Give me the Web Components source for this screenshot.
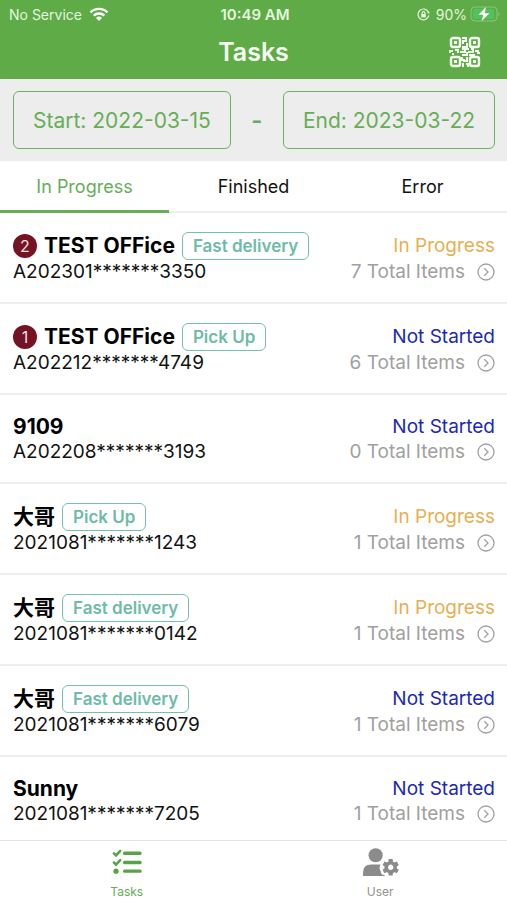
<!DOCTYPE html>
<html lang="en">
<head>
<meta charset="utf-8">
<meta name="viewport" content="width=device-width, initial-scale=1">
<title>Tasks</title>
<style>
    body {
        margin: 0;
        font-family: Inter, "Noto Sans CJK SC", sans-serif;
    }
</style>
</head>
<body>
<task-app></task-app>

<script>
class StatusBar extends HTMLElement {

    constructor() {
        super()
        this.attachShadow({mode: "open"})
        this.render()
    }

    render() {
        this.shadowRoot.innerHTML = `
            <style>
                :host {
                    display: grid;
                    grid-template-columns: 1fr auto 1fr;
                    align-items: center;
                    height: 28px;
                    padding: 0 6px 0 9px;
                    font-size: 14px;
                    color: #e4f6dd;
                }

                .side {
                    display: flex;
                    align-items: center;
                    gap: 7px;
                }

                .right {
                    justify-content: flex-end;
                    gap: 3px;
                }

                .lock {
                    margin-right: 3px;
                }

                time {
                    font-size: 15px;
                    font-weight: 600;
                }

                svg {
                    display: block;
                }
            </style>
            <div class="side">
                <span>No Service</span>
                <svg width="20" height="14" viewBox="0 0 20 14" fill="none" stroke="#fff" stroke-width="2.4">
                    <path d="M1.5 5.4a12 12 0 0 1 17 0"/>
                    <path d="M4.7 8.6a7.6 7.6 0 0 1 10.6 0"/>
                    <path d="M7 10.9a4.3 4.3 0 0 1 6 0L10 14z" fill="#fff" stroke="none"/>
                </svg>
            </div>
            <time>10:49 AM</time>
            <div class="side right">
                <svg class="lock" width="13" height="13" viewBox="0 0 13 13" fill="none" stroke="#e4f6dd" stroke-width="1.2">
                    <path d="M11.4 4.2A5.4 5.4 0 1 0 11.8 7.4"/>
                    <path d="M10 5.2l2.8.2-1-2.4z" fill="#e4f6dd" stroke="none"/>
                    <rect x="4.2" y="6" width="4.6" height="3.4" fill="#e4f6dd" stroke="none"/>
                    <path d="M5.1 6V5a1.4 1.4 0 0 1 2.8 0v1"/>
                </svg>
                <span>90%</span>
                <svg width="31" height="16" viewBox="0 0 31 16">
                    <rect x="1" y="1" width="26" height="14" rx="4" fill="none" stroke="#86c77c"/>
                    <rect x="3" y="3" width="21" height="10" rx="2" fill="#4fc35d"/>
                    <path d="M28.5 5.5q2 2.5 0 5z" fill="#86c77c"/>
                    <path d="M16.5 0L8 9h5L11 16l9-9h-5z" fill="#fff" stroke="#5eab48" stroke-width=".5"/>
                </svg>
            </div>
        `
    }
}

class TitleBar extends HTMLElement {

    constructor() {
        super()
        this.attachShadow({mode: "open"})
        this.render()
    }

    render() {
        this.shadowRoot.innerHTML = `
            <style>
                :host {
                    display: grid;
                    grid-template-columns: 1fr auto 1fr;
                    align-items: center;
                    height: 48px;
                    padding: 0 26px 3px;
                    color: #f6fff2;
                }

                h1 {
                    grid-column: 2;
                    margin: 0;
                    font-size: 25px;
                    line-height: 30px;
                    font-weight: 600;
                }

                button {
                    justify-self: end;
                    padding: 0;
                    border: 0;
                    background: none;
                    color: inherit;
                    cursor: pointer;
                }

                svg {
                    display: block;
                }
            </style>
            <h1><slot></slot></h1>
            <button aria-label="Scan code">
                <svg width="32" height="32" viewBox="0 0 32 32" fill="none" stroke="currentColor" stroke-width="2.4">
                    <rect x="2" y="2" width="9" height="9" rx="2"/>
                    <rect x="21" y="2" width="9" height="9" rx="2"/>
                    <rect x="2" y="21" width="9" height="9" rx="2"/>
                    <rect x="21" y="21" width="9" height="9" rx="2"/>
                    <path d="M5 6.5h3M24 6.5h3M5 25.5h3M24 25.5h3" stroke-width="3"/>
                    <path d="M13 2h4M17 1v4h-3v3M18 7v4h-4v3M1 17v-2h3M6 14h3v3M11 16h5v-3h4M22 13h2v3h-5M27 16v-2M29 14v3h2M3 18h2M13 19h5v-3M20 19h6M13 21v3h3M18 21v4h-4M14 27v4M17 28h2v3" stroke-width="2"/>
                </svg>
            </button>
        `
    }
}

class DateRange extends HTMLElement {

    constructor() {
        super()
        this.attachShadow({mode: "open"})
        this.render()
    }

    render() {
        this.shadowRoot.innerHTML = `
            <style>
                :host {
                    display: flex;
                    align-items: center;
                    justify-content: space-between;
                    padding: 12px 12px 12px 13px;
                    background: #ededed;
                    color: #67ad57;
                }

                button {
                    height: 58px;
                    padding: 0 19px;
                    border: 1px solid #6fb063;
                    border-radius: 6px;
                    background: none;
                    font: inherit;
                    font-size: 21px;
                    color: inherit;
                    cursor: pointer;
                }

                span {
                    font-size: 24px;
                    font-weight: 600;
                }
            </style>
            <button>Start: ${this.getAttribute("start")}</button>
            <span>-</span>
            <button>End: ${this.getAttribute("end")}</button>
        `
    }
}

class TaskTabs extends HTMLElement {

    constructor() {
        super()
        this.attachShadow({mode: "open"})
        this.render()
        this.tabs = this.shadowRoot.querySelectorAll("button")
    }

    connectedCallback() {
        this.tabs.forEach(tab => {
            tab.addEventListener("click", () => this.select(tab))
        })
    }

    select(selected) {
        this.tabs.forEach(tab => {
            tab.setAttribute("aria-selected", tab === selected)
        })
    }

    render() {
        this.shadowRoot.innerHTML = `
            <style>
                :host {
                    display: block;
                    background: linear-gradient(#eee, #eee) bottom / 100% 2px no-repeat;
                }

                div {
                    display: grid;
                    grid-template-columns: repeat(3, 1fr);
                    height: 52px;
                }

                button {
                    padding: 2px 0 0;
                    border: 0;
                    border-bottom: 3px solid transparent;
                    background: none;
                    font: inherit;
                    font-size: 18px;
                    color: #111;
                    cursor: pointer;
                }

                button[aria-selected="true"] {
                    border-bottom-color: #67ad57;
                    color: #67ad57;
                }
            </style>
            <div role="tablist">
                <button role="tab" aria-selected="true">In Progress</button>
                <button role="tab" aria-selected="false">Finished</button>
                <button role="tab" aria-selected="false">Error</button>
            </div>
        `
    }
}

class TaskRow extends HTMLElement {

    constructor() {
        super()
        this.attachShadow({mode: "open"})
    }

    connectedCallback() {
        this.render()
    }

    render() {
        const count = this.getAttribute("count")
        const tag = this.getAttribute("tag")
        const started = this.hasAttribute("started")

        this.shadowRoot.innerHTML = `
            <style>
                :host {
                    display: block;
                    border-bottom: 2px solid #eee;
                }

                a {
                    display: block;
                    padding: 19px 12px 18px 13px;
                    color: #111;
                    text-decoration: none;
                }

                .line {
                    display: flex;
                    align-items: center;
                    justify-content: space-between;
                    font-size: 19px;
                    line-height: 24px;
                }

                .name {
                    display: flex;
                    align-items: center;
                    gap: 7px;
                }

                h2 {
                    margin: 0;
                    font-size: 21px;
                    line-height: 26px;
                    font-weight: 700;
                    color: #000;
                }

                .count {
                    width: 24px;
                    border-radius: 50%;
                    background: #731425;
                    font-size: 16px;
                    text-align: center;
                    color: #f5dfe2;
                }

                .tag {
                    padding: 1px 10px;
                    border: 1px solid #74c0ae;
                    border-radius: 6px;
                    font-size: 17px;
                    font-weight: 600;
                    color: #6dbba8;
                }

                .status {
                    color: #1c28b4;
                }

                .status.started {
                    color: #e5b052;
                }

                .items {
                    display: flex;
                    align-items: center;
                    gap: 12px;
                    color: #a0a0a0;
                }
            </style>
            <a href="#">
                <div class="line">
                    <div class="name">
                        ${count ? `<span class="count">${count}</span>` : ""}
                        <h2><slot></slot></h2>
                        ${tag ? `<span class="tag">${tag}</span>` : ""}
                    </div>
                    <span class="status ${started ? "started" : ""}">${started ? "In Progress" : "Not Started"}</span>
                </div>
                <div class="line">
                    <span>${this.getAttribute("number")}</span>
                    <div class="items">
                        <span>${this.getAttribute("items")} Total Items</span>
                        <svg width="18" height="18" viewBox="0 0 18 18" fill="none" stroke="#a0a0a0" stroke-width="1.3">
                            <circle cx="9" cy="9" r="8"/>
                            <path d="M7.3 5.3L11 9l-3.7 3.7"/>
                        </svg>
                    </div>
                </div>
            </a>
        `
    }
}

class BottomNav extends HTMLElement {

    constructor() {
        super()
        this.attachShadow({mode: "open"})
        this.render()
    }

    render() {
        this.shadowRoot.innerHTML = `
            <style>
                :host {
                    display: block;
                    border-top: 1px solid #e2e2e2;
                    background: #fff;
                }

                nav {
                    display: grid;
                    grid-template-columns: 1fr 1fr;
                }

                a {
                    display: flex;
                    flex-direction: column;
                    align-items: center;
                    gap: 6px;
                    padding: 5px 0 0;
                    height: 54px;
                    font-size: 12px;
                    line-height: 16px;
                    color: #939393;
                    text-decoration: none;
                }

                a[aria-current] {
                    color: #67ad57;
                }
            </style>
            <nav>
                <a href="#" aria-current="page">
                    <svg width="32" height="33" viewBox="0 0 32 33" fill="none" stroke="#57a347" stroke-width="3" stroke-linecap="round">
                        <path d="M13.5 7.5h16M13.5 17h16M13.5 26h16" stroke-width="3.4"/>
                        <path d="M2.500 7.500l2.200 2.200 4.300-4.700M2.500 17l2.200 2.200 4.300-4.700" stroke-width="2.6"/>
                        <circle cx="4.700" cy="26" r="2.700" fill="#57a347" stroke="none"/>
                    </svg>
                    Tasks
                </a>
                <a href="#">
                    <svg width="40" height="33" viewBox="0 0 40 33" fill="#8b8b8b">
                        <circle cx="15.5" cy="9.5" r="7.3"/>
                        <path d="M2.5 31v-3.500q0-8.500 8.500-8.500h9.500q-2 4 .3 7-.3 3.500 3.700 4l.5 1z"/>
                        <g transform="translate(31 22)">
                            <circle r="4.6" fill="none" stroke="#8b8b8b" stroke-width="3.6"/>
                            <path d="M-2-8.500h4l.5 3.500h-5zM-2 8.500h4l.5-3.500h-5z"/>
                            <path d="M-2-8.500h4l.5 3.500h-5zM-2 8.500h4l.5-3.500h-5z" transform="rotate(60)"/>
                            <path d="M-2-8.500h4l.5 3.500h-5zM-2 8.500h4l.5-3.500h-5z" transform="rotate(120)"/>
                        </g>
                    </svg>
                    User
                </a>
            </nav>
        `
    }
}

class TaskApp extends HTMLElement {

    constructor() {
        super()
        this.attachShadow({mode: "open"})
        this.render()
    }

    render() {
        this.shadowRoot.innerHTML = `
            <style>
                :host {
                    display: flex;
                    flex-direction: column;
                    height: 100vh;
                    background: #fff;
                }

                header {
                    background: #5eab48;
                }

                main {
                    flex: 1;
                    min-height: 0;
                    overflow-y: auto;
                    scrollbar-width: none;
                }
            </style>
            <header>
                <status-bar></status-bar>
                <title-bar>Tasks</title-bar>
            </header>
            <date-range start="2022-03-15" end="2023-03-22"></date-range>
            <task-tabs></task-tabs>
            <main>
                <task-row count="2" tag="Fast delivery" number="A202301*******3350" items="7" started>TEST OFFice</task-row>
                <task-row count="1" tag="Pick Up" number="A202212*******4749" items="6">TEST OFFice</task-row>
                <task-row number="A202208*******3193" items="0">9109</task-row>
                <task-row tag="Pick Up" number="2021081*******1243" items="1" started>大哥</task-row>
                <task-row tag="Fast delivery" number="2021081*******0142" items="1" started>大哥</task-row>
                <task-row tag="Fast delivery" number="2021081*******6079" items="1">大哥</task-row>
                <task-row number="2021081*******7205" items="1">Sunny</task-row>
            </main>
            <bottom-nav></bottom-nav>
        `
    }
}

customElements.define("status-bar", StatusBar)
customElements.define("title-bar", TitleBar)
customElements.define("date-range", DateRange)
customElements.define("task-tabs", TaskTabs)
customElements.define("task-row", TaskRow)
customElements.define("bottom-nav", BottomNav)
customElements.define("task-app", TaskApp)
</script>
</body>
</html>
